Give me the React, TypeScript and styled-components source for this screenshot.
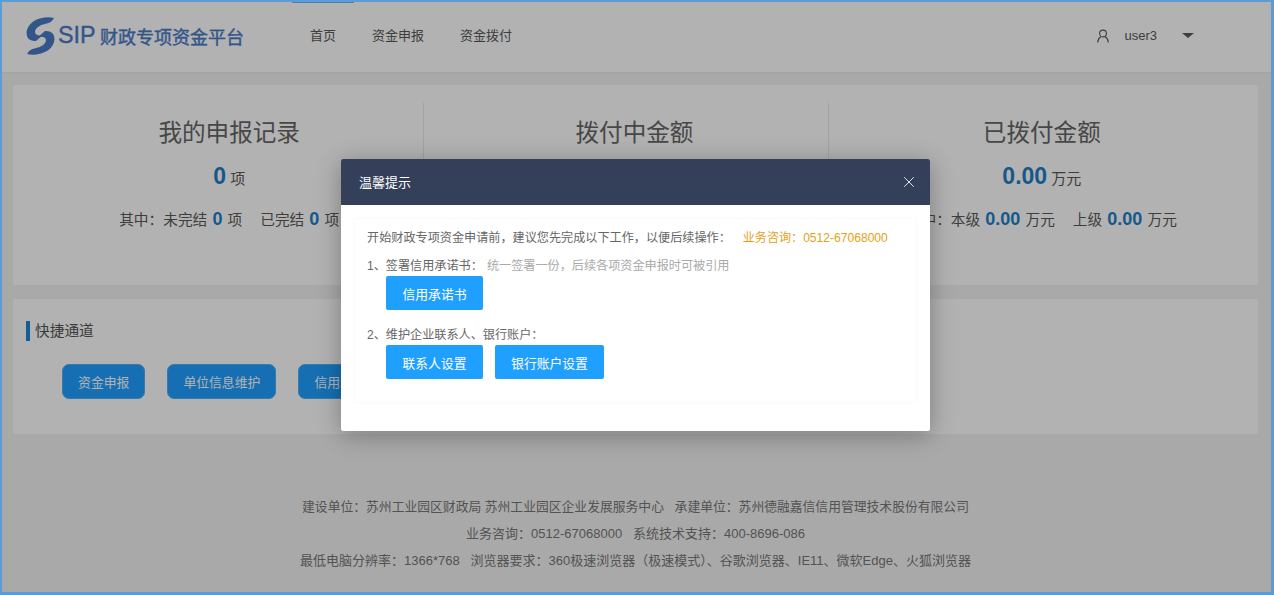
import React from 'react';
import styled, { createGlobalStyle } from 'styled-components';
import { X } from 'lucide-react';

const GlobalStyle = createGlobalStyle`
  html, body {
    margin: 0;
    padding: 0;
    height: 100%;
    overflow: hidden;
  }
  body {
    font-family: "Liberation Sans", "Noto Sans CJK SC", sans-serif;
    font-size: 14px;
    color: #333;
    background: #f3f3f3;
  }
`;

const Frame = styled.div`
  position: relative;
  box-sizing: border-box;
  width: 1274px;
  height: 595px;
  border: solid #5b9bd8;
  border-width: 2px 3px 3px 2px;
  overflow: hidden;
  background: #f3f3f3;
`;

const Header = styled.header`
  display: flex;
  align-items: center;
  height: 70px;
  padding: 0 0 0 24px;
  background: #fff;
  box-shadow: 0 1px 2px rgba(0, 0, 0, 0.05);
`;

const Logo = styled.div`
  display: flex;
  align-items: center;
  width: 266px;
  flex: none;
  margin-bottom: 3px;
  box-sizing: border-box;
  color: #4a7cc6;
`;

const LogoSip = styled.span`
  width: 42px;
  margin-left: 3px;
  font-size: 24.5px;
  line-height: 1;
  -webkit-text-stroke: 0.4px #4a7cc6;
  transform: scaleX(0.95);
  transform-origin: left center;
`;

const LogoName = styled.span`
  font-size: 18px;
  white-space: nowrap;
  -webkit-text-stroke: 0.4px #4a7cc6;
`;

const Nav = styled.nav`
  display: flex;
  align-self: stretch;
`;

const NavItem = styled.a<{ $active?: boolean }>`
  display: flex;
  align-items: center;
  box-sizing: border-box;
  height: 64px;
  padding: 0 18px;
  font-size: 13px;
  color: #595959;
  border-top: 1px solid ${(p) => (p.$active ? '#6cb8ff' : 'transparent')};
`;

const UserBox = styled.div`
  display: flex;
  align-items: center;
  margin-left: auto;
  margin-right: 77px;
  margin-bottom: 3px;
  font-size: 13px;
  color: #595959;
`;

const UserName = styled.span`
  margin: 0 25px 0 14px;
`;

const Caret = styled.span`
  width: 0;
  height: 0;
  border-style: solid;
  border-width: 5px 6px 0;
  border-color: #595959 transparent transparent;
`;

const Main = styled.main`
  padding: 13px 13px 0 11px;
`;

const StatsCard = styled.section`
  display: grid;
  grid-template-columns: repeat(3, 1fr);
  height: 200px;
  padding: 0 13px;
  background: #fff;
  border-radius: 2px;
`;

const StatCol = styled.div<{ $gap: number; $last?: boolean }>`
  display: flex;
  flex-direction: column;
  align-items: center;
  margin: 18px ${(p) => p.$gap}px 0 0;
  padding-left: 9px;
  border-right: ${(p) => (p.$last ? 'none' : '1px solid #e8e8e8')};
  white-space: nowrap;
`;

const StatTitle = styled.h2`
  margin: 15px 0 0;
  font-size: 23.6px;
  line-height: 30px;
  font-weight: 400;
  color: #666;
`;

const StatTotal = styled.div`
  margin-top: 13px;
  font-size: 15px;
  line-height: 30px;
  color: #595959;
`;

const TotalNumber = styled.b`
  font-size: 23px;
  color: #1f7fc9;
`;

const StatDetail = styled.div`
  display: flex;
  gap: 18px;
  margin-top: 13px;
  font-size: 14.7px;
  line-height: 24px;
  color: #595959;
`;

const DetailNumber = styled.b`
  font-size: 18px;
  margin: 0 1px;
  color: #1f7fc9;
`;

const QuickCard = styled.section`
  height: 135px;
  margin-top: 14px;
  padding: 22px 13px 0;
  box-sizing: border-box;
  background: #fff;
  border-radius: 2px;
`;

const QuickTitle = styled.h3`
  margin: 0;
  padding-left: 5px;
  font-size: 14.7px;
  line-height: 20px;
  font-weight: 400;
  color: #555;
  border-left: 4px solid #1f86d6;
`;

const QuickRow = styled.div`
  display: flex;
  gap: 22px;
  margin-top: 23px;
  padding-left: 36px;
`;

const QuickButton = styled.button`
  box-sizing: border-box;
  height: 35px;
  padding: 0 15.1px;
  font: inherit;
  font-size: 12.8px;
  color: #fff;
  background: #1fa0ff;
  border: 1px solid #4fb0f8;
  border-radius: 7px;
`;

const Footer = styled.footer`
  margin-top: 59px;
  text-align: center;
  line-height: 27px;
  color: #777;
`;

const FooterLine = styled.div<{ $tight?: boolean }>`
  font-size: ${(p) => (p.$tight ? 12.8 : 13)}px;
`;

const Backdrop = styled.div`
  position: absolute;
  inset: 0;
  background: rgba(0, 0, 0, 0.3);
`;

const Modal = styled.div`
  position: absolute;
  left: 339px;
  top: 157px;
  width: 589px;
  height: 272px;
  background: #fff;
  border-radius: 2px;
  box-shadow: 0 4px 24px rgba(0, 0, 0, 0.3);
  overflow: hidden;
`;

const ModalHead = styled.div`
  display: flex;
  align-items: center;
  justify-content: space-between;
  box-sizing: border-box;
  height: 46px;
  padding: 0 12px 2px 18px;
  font-size: 13px;
  color: #fff;
  background: #344059;
`;

const CloseButton = styled.span`
  display: flex;
  margin-top: 2px;
  color: #e6e8ec;
`;

const ModalBody = styled.div`
  margin: 14px 14px 0;
  padding: 12px 12px 15px;
  height: 183px;
  box-sizing: border-box;
  border-radius: 2px;
  box-shadow: 0 0 3px rgba(0, 0, 0, 0.05);
  font-size: 12.13px;
  color: #666;
  white-space: nowrap;
`;

const IntroRow = styled.div`
  display: flex;
  line-height: 14px;
`;

const Hotline = styled.span`
  margin-left: 12px;
  font-size: 12.08px;
  color: #e6a016;
`;

const StepRow = styled.div<{ $gap: number }>`
  margin-top: ${(p) => p.$gap}px;
  line-height: 14px;
`;

const StepHint = styled.span`
  margin-left: 4px;
  color: #aaa;
`;

const ActionRow = styled.div`
  display: flex;
  gap: 12px;
  margin: 3px 0 0 19px;
`;

const ActionButton = styled.button<{ $wide?: boolean }>`
  width: ${(p) => (p.$wide ? 109 : 97)}px;
  height: 34px;
  padding: 0;
  font: inherit;
  font-size: 12.8px;
  color: #fff;
  background: #1fa0ff;
  border: none;
  border-radius: 2px;
`;

const stats = [
  {
    title: '我的申报记录',
    total: '0',
    unit: '项',
    gap: 8,
    parts: [
      { label: '其中：未完结', value: '0' },
      { label: '已完结', value: '0' },
    ],
  },
  {
    title: '拨付中金额',
    total: '0.00',
    unit: '万元',
    gap: 10,
    parts: [
      { label: '其中：本级', value: '0.00' },
      { label: '上级', value: '0.00' },
    ],
  },
  {
    title: '已拨付金额',
    total: '0.00',
    unit: '万元',
    gap: 9,
    parts: [
      { label: '其中：本级', value: '0.00' },
      { label: '上级', value: '0.00' },
    ],
  },
];

const quickLinks = ['资金申报', '单位信息维护', '信用承诺书', '联系人设置', '银行账户设置'];

function LogoMark() {
  return (
    <svg width="29" height="38" viewBox="0 0 29 38" fill="#4a7cc6">
      <path d="M28 1 C22 -0.5 14 0.5 8 4 C2 8 -0.5 14 1 19 C2 23 6 24 10 24 L17 18 C13 19 9 18 9 15 C9 11 14 8 19 7 C23 6 26 5 28 1 Z" />
      <path d="M1 37 C7 38.5 15 37.5 21 34 C27 30 29.5 24 28 19 C27 15 23 14 19 14 L12 20 C16 19 20 20 20 23 C20 27 15 30 10 31 C6 32 3 33 1 37 Z" />
    </svg>
  );
}

function UserIcon() {
  return (
    <svg width="14" height="14" viewBox="0 0 14 14" fill="none" stroke="#595959" strokeWidth="1.1">
      <circle cx="7" cy="4.5" r="3.4" />
      <path d="M1.6 13.5 C2 10.5 3.4 8.6 4.8 7.8 M12.4 13.5 C12 10.5 10.6 8.6 9.2 7.8" />
    </svg>
  );
}

export default function App() {
  return (
    <Frame>
      <GlobalStyle />
      <Header>
        <Logo>
          <LogoMark />
          <LogoSip>SIP</LogoSip>
          <LogoName>财政专项资金平台</LogoName>
        </Logo>
        <Nav>
          <NavItem $active>首页</NavItem>
          <NavItem>资金申报</NavItem>
          <NavItem>资金拨付</NavItem>
        </Nav>
        <UserBox>
          <UserIcon />
          <UserName>user3</UserName>
          <Caret />
        </UserBox>
      </Header>
      <Main>
        <StatsCard>
          {stats.map((stat, i) => (
            <StatCol key={stat.title} $gap={stat.gap} $last={i === stats.length - 1}>
              <StatTitle>{stat.title}</StatTitle>
              <StatTotal>
                <TotalNumber>{stat.total}</TotalNumber> {stat.unit}
              </StatTotal>
              <StatDetail>
                {stat.parts.map((part) => (
                  <span key={part.label}>
                    {part.label} <DetailNumber>{part.value}</DetailNumber> {stat.unit}
                  </span>
                ))}
              </StatDetail>
            </StatCol>
          ))}
        </StatsCard>
        <QuickCard>
          <QuickTitle>快捷通道</QuickTitle>
          <QuickRow>
            {quickLinks.map((link) => (
              <QuickButton key={link}>{link}</QuickButton>
            ))}
          </QuickRow>
        </QuickCard>
        <Footer>
          <FooterLine $tight>建设单位：苏州工业园区财政局 苏州工业园区企业发展服务中心&nbsp;&nbsp; 承建单位：苏州德融嘉信信用管理技术股份有限公司</FooterLine>
          <FooterLine>业务咨询：0512-67068000&nbsp;&nbsp; 系统技术支持：400-8696-086</FooterLine>
          <FooterLine>最低电脑分辨率：1366*768&nbsp;&nbsp; 浏览器要求：360极速浏览器（极速模式）、谷歌浏览器、IE11、微软Edge、火狐浏览器</FooterLine>
        </Footer>
      </Main>
      <Backdrop />
      <Modal>
        <ModalHead>
          温馨提示
          <CloseButton>
            <X size={18} strokeWidth={1.3} />
          </CloseButton>
        </ModalHead>
        <ModalBody>
          <IntroRow>
            开始财政专项资金申请前，建议您先完成以下工作，以便后续操作：
            <Hotline>业务咨询：0512-67068000</Hotline>
          </IntroRow>
          <StepRow $gap={14}>
            1、签署信用承诺书：<StepHint>统一签署一份，后续各项资金申报时可被引用</StepHint>
          </StepRow>
          <ActionRow>
            <ActionButton>信用承诺书</ActionButton>
          </ActionRow>
          <StepRow $gap={18}>2、维护企业联系人、银行账户：</StepRow>
          <ActionRow>
            <ActionButton>联系人设置</ActionButton>
            <ActionButton $wide>银行账户设置</ActionButton>
          </ActionRow>
        </ModalBody>
      </Modal>
    </Frame>
  );
}
